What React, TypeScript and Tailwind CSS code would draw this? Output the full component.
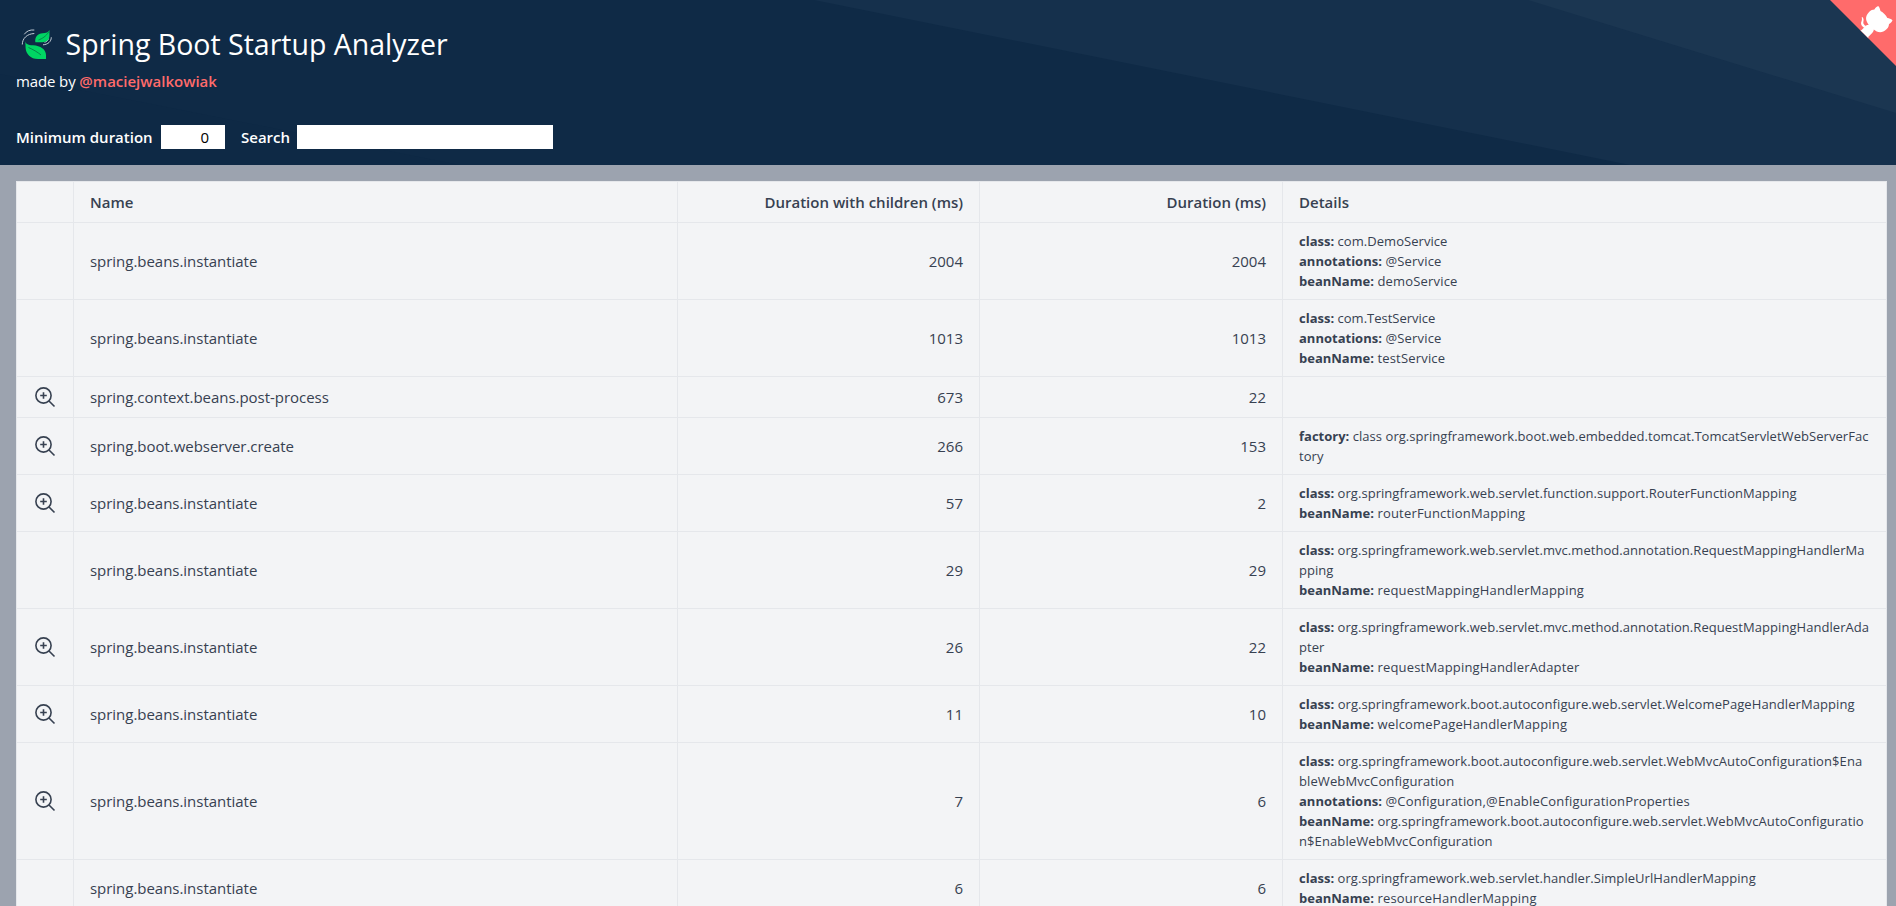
import React from "react";

type Detail = [label: string, value: string, tracking?: string];
type Row = { name: string; total: number; own: number; zoom?: boolean; details: Detail[] };

const SHORT = "tracking-[0.18px]";
const LONG = "tracking-[0.1px]";

const rows: Row[] = [
  { name: "spring.beans.instantiate", total: 2004, own: 2004, details: [["class", "com.DemoService"], ["annotations", "@Service", SHORT], ["beanName", "demoService", SHORT]] },
  { name: "spring.beans.instantiate", total: 1013, own: 1013, details: [["class", "com.TestService", "tracking-normal"], ["annotations", "@Service", SHORT], ["beanName", "testService", SHORT]] },
  { name: "spring.context.beans.post-process", total: 673, own: 22, zoom: true, details: [] },
  { name: "spring.boot.webserver.create", total: 266, own: 153, zoom: true, details: [["factory", "class org.springframework.boot.web.embedded.tomcat.TomcatServletWebServerFac\ntory"]] },
  { name: "spring.beans.instantiate", total: 57, own: 2, zoom: true, details: [["class", "org.springframework.web.servlet.function.support.RouterFunctionMapping"], ["beanName", "routerFunctionMapping", SHORT]] },
  { name: "spring.beans.instantiate", total: 29, own: 29, details: [["class", "org.springframework.web.servlet.mvc.method.annotation.RequestMappingHandlerMa\npping"], ["beanName", "requestMappingHandlerMapping", SHORT]] },
  { name: "spring.beans.instantiate", total: 26, own: 22, zoom: true, details: [["class", "org.springframework.web.servlet.mvc.method.annotation.RequestMappingHandlerAda\npter"], ["beanName", "requestMappingHandlerAdapter", SHORT]] },
  { name: "spring.beans.instantiate", total: 11, own: 10, zoom: true, details: [["class", "org.springframework.boot.autoconfigure.web.servlet.WelcomePageHandlerMapping", "tracking-[0.08px]"], ["beanName", "welcomePageHandlerMapping", SHORT]] },
  { name: "spring.beans.instantiate", total: 7, own: 6, zoom: true, details: [["class", "org.springframework.boot.autoconfigure.web.servlet.WebMvcAutoConfiguration$Ena\nbleWebMvcConfiguration", LONG], ["annotations", "@Configuration,@EnableConfigurationProperties", SHORT], ["beanName", "org.springframework.boot.autoconfigure.web.servlet.WebMvcAutoConfiguratio\nn$EnableWebMvcConfiguration", LONG]] },
  { name: "spring.beans.instantiate", total: 6, own: 6, details: [["class", "org.springframework.web.servlet.handler.SimpleUrlHandlerMapping"], ["beanName", "resourceHandlerMapping", SHORT]] },
];

function Logo() {
  return (
    <svg width="40" height="40" viewBox="16 24 40 40" fill="none" className="mb-[5px] shrink-0">
      <path d="M24.300 34.300C26.500 31 30 29.600 34.300 30M22.300 44.500C22.300 38.500 27 33.800 34.300 33.500" stroke="#c3ccd6" strokeWidth="1" />
      <path d="M51.300 37.300C51.300 41.500 48 44.500 43 44.800M48.500 38.500C48 40.500 46.500 41.800 44.500 42.300" stroke="#c3ccd6" strokeWidth="1" />
      <path d="M49.400 30V36C49.200 39.800 46.500 42.200 42.500 42.200H35.300C34.700 36.500 38 33.800 42.500 33.300C46 32.900 48.500 32.500 49.400 30Z" fill="#00d663" />
      <path d="M25.300 41C25.500 43.800 27.500 45 33 45.300C40.500 45.800 46 49.500 46 55V59H38C30.500 59 26 54 25.600 48Z" fill="#00d663" />
      <path d="M38.500 40C42 38.700 46 36.500 49 31.500M28.500 47.500C33 49.500 37.500 52 41 55" stroke="#05874a" strokeWidth="1" />
    </svg>
  );
}

function GithubCorner() {
  return (
    <svg width="66" height="66" viewBox="1830 0 66 66" className="absolute top-0 right-0 block">
      <path d="M1830 0H1896V66Z" fill="#ff6b6b" />
      <g transform="translate(1823.3 -6.9) scale(0.32)" fill="#fff">
        <path d="M128.300 109C113.800 99.700 119 89.600 119 89.600C122 82.700 120.500 78.600 120.500 78.600C119.200 72 123.400 76.300 123.400 76.300C127.300 80.900 125.500 87.300 125.500 87.300C122.900 97.600 130.600 101.900 134.400 103.200" />
        <path d="M115 115C114.900 115.100 118.700 116.500 119.800 115.400L133.700 101.600C136.900 99.200 139.900 98.400 142.200 98.600C133.800 88 127.500 74.400 143.800 58C148.500 53.400 154 51.200 159.700 51C160.300 49.400 163.200 43.600 171.400 40.100C171.400 40.100 176.100 42.500 178.800 56.200C183.100 58.600 187.200 61.800 190.900 65.400C194.500 69 197.700 73.200 200.100 77.600C213.800 80.200 216.300 84.900 216.300 84.900C212.700 93.100 206.900 96 205.400 96.600C205.100 102.400 203 107.800 198.300 112.500C181.900 128.900 168.300 122.500 157.700 114.100C157.900 116.900 156.700 120.900 152.700 124.900L141 136.500C139.800 137.700 141.600 141.900 141.800 141.800Z" />
      </g>
    </svg>
  );
}

function ZoomIn() {
  return (
    <svg width="24" height="24" viewBox="0 0 24 24" fill="none" stroke="#374151" strokeWidth="1.6" className="mx-auto block">
      <circle cx="10.500" cy="10.500" r="7.600" />
      <path d="M16 16l5.500 5.500M10.500 7.200v6.600M7.200 10.500h6.600" />
    </svg>
  );
}

export default function App() {
  return (
    <div className="h-[906px] overflow-hidden bg-[#9ca3af] font-['Open_Sans','Noto_Sans',sans-serif] text-[15px] leading-6 text-[#374151]">
      <header className="relative h-[165px] overflow-hidden bg-[#0f2a46] px-4 text-white">
        <svg className="absolute inset-0" width="1896" height="165">
          <path d="M0 74L460 165H0Z" fill="#0e2945" />
          <path d="M814 0H1896V165H1630Z" fill="#15304c" />
          <path d="M1528 0H1896V113Z" fill="#1b3651" />
        </svg>
        <GithubCorner />
        <div className="relative flex flex-col">
          <div className="flex h-[69px] items-end gap-[9.5px]">
            <Logo />
            <h1 className="mb-[5px] text-[28.5px] leading-[40px]">Spring Boot Startup Analyzer</h1>
          </div>
          <p className="leading-6 tracking-[-0.12px]">
            made by <a className="font-semibold tracking-normal text-[#ff6b6b]">@maciejwalkowiak</a>
          </p>
          <div className="mt-8 flex h-6 items-center">
            <label className="w-[145px] font-semibold whitespace-nowrap">Minimum duration</label>
            <input className="h-6 w-16 bg-white px-4 text-right text-black" defaultValue="0" />
            <label className="ml-4 w-[56px] font-semibold">Search</label>
            <input className="h-6 w-64 bg-white px-2 text-black" />
          </div>
        </div>
      </header>
      <main className="pt-4 pl-4">
        <table className="w-[1871px] table-fixed border-collapse bg-[#f3f4f6]">
          <colgroup>
            <col className="w-[57px]" />
            <col className="w-[604px]" />
            <col className="w-[302px]" />
            <col className="w-[303px]" />
            <col className="w-[604px]" />
          </colgroup>
          <thead>
            <tr className="h-[41px] font-semibold">
              <th className="border border-gray-200" />
              <th className="border border-gray-200 px-4 py-2 text-left font-semibold">Name</th>
              <th className="border border-gray-200 px-4 py-2 text-right font-semibold">Duration with children (ms)</th>
              <th className="border border-gray-200 px-4 py-2 text-right font-semibold">Duration (ms)</th>
              <th className="border border-gray-200 px-4 py-2 text-left font-semibold">Details</th>
            </tr>
          </thead>
          <tbody>
            {rows.map((r, i) => (
              <tr key={i}>
                <td className="border border-gray-200 px-4 py-2">{r.zoom && <ZoomIn />}</td>
                <td className="border border-gray-200 px-4 py-2 tracking-[-0.03px]">{r.name}</td>
                <td className="border border-gray-200 px-4 py-2 text-right">{r.total}</td>
                <td className="border border-gray-200 px-4 py-2 text-right">{r.own}</td>
                <td className="border border-gray-200 px-4 py-2 text-[13px] leading-5">
                  {r.details.map(([label, value, tracking = "tracking-[0.05px]"]) => (
                    <div key={label} className={`whitespace-pre ${tracking}`}>
                      <span className="font-bold tracking-normal">{label}:</span> {value}
                    </div>
                  ))}
                </td>
              </tr>
            ))}
          </tbody>
        </table>
      </main>
    </div>
  );
}
